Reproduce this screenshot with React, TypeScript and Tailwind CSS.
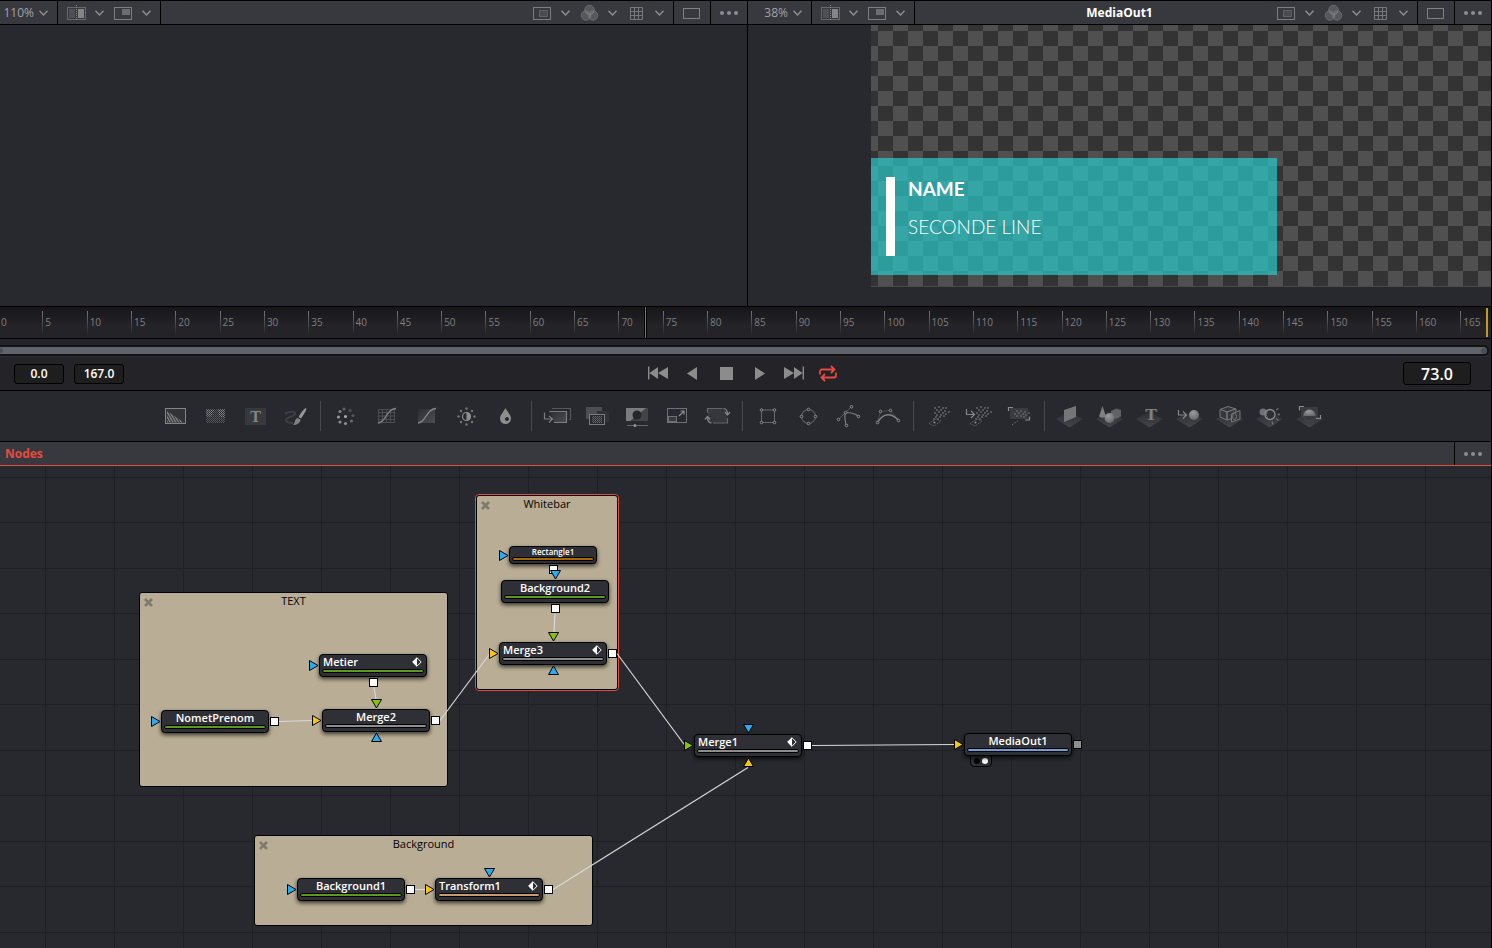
import type { ReactNode } from 'react';
import clsx from 'clsx';

const FONT = "font-['Open_Sans','Noto_Sans',sans-serif]";

/* ---------- Viewer header icons ---------- */

function Chevron() {
  return (
    <svg width="9" height="6" viewBox="0 0 9 6" fill="none" stroke="#8f8f8f" strokeWidth="1.4">
      <path d="M0.5 0.7 4.5 5 8.5 0.7" />
    </svg>
  );
}

function SplitIcon() {
  return (
    <svg width="19" height="16" viewBox="0 0 19 16" fill="none">
      <rect x="0.5" y="2.5" width="18" height="12" stroke="#66676a" />
      <rect x="2" y="4" width="6" height="9" fill="#4f5055" />
      <rect x="11" y="4" width="6" height="9" fill="#858585" />
      <path d="M9.5 0v16" stroke="#8a8a8a" strokeDasharray="1 1" />
    </svg>
  );
}

function SubViewIcon() {
  return (
    <svg width="20" height="16" viewBox="0 0 20 16" fill="none">
      <rect x="1.5" y="2.5" width="17" height="12" stroke="#7d7d7f" />
      <rect x="9" y="4" width="8" height="6" fill="#6c6d70" />
    </svg>
  );
}

function RoiIcon() {
  return (
    <svg width="19" height="16" viewBox="0 0 19 16" fill="none">
      <rect x="0.5" y="2.5" width="17" height="12" stroke="#7d7d7f" />
      <rect x="6" y="5" width="8" height="7" fill="#4b4c51" />
      <rect x="6.5" y="5.5" width="8" height="6" stroke="#77787b" strokeDasharray="1 1" />
    </svg>
  );
}

function ChannelsIcon() {
  return (
    <svg width="20" height="18" viewBox="0 0 20 18" fill="#a0a0a0" fillOpacity="0.3" stroke="#6c6d70">
      <circle cx="10.5" cy="6" r="4.7" />
      <circle cx="7" cy="11.5" r="4.7" />
      <circle cx="14" cy="11.5" r="4.7" />
    </svg>
  );
}

function GridIcon() {
  return (
    <svg width="20" height="16" viewBox="0 0 20 16" fill="none" stroke="#77787b">
      <path d="M4.5 2.5h12v12h-12zM8.5 2.5v12M12.5 2.5v12M4.5 6.5h12M4.5 10.5h12" />
    </svg>
  );
}

function SingleViewIcon() {
  return (
    <svg width="18" height="16" viewBox="0 0 18 16" fill="none" stroke="#808082">
      <rect x="0.5" y="3.5" width="16" height="10" />
    </svg>
  );
}

function Dots() {
  return (
    <svg width="18" height="4" viewBox="0 0 18 4" fill="#8d8d8f">
      <circle cx="2" cy="2" r="2" />
      <circle cx="9" cy="2" r="2" />
      <circle cx="16" cy="2" r="2" />
    </svg>
  );
}

function IconMenu({ label, children }: { label: string; children: ReactNode }) {
  return (
    <button type="button" aria-label={label} className="flex items-center gap-[9px]">
      {children}
      <Chevron />
    </button>
  );
}

function ViewerHeader({ zoom, title, zoomWidth }: { zoom: string; title?: string; zoomWidth: string }) {
  return (
    <header className="grid h-[25px] grid-cols-[1fr_auto_1fr] border-y border-black bg-[#38393e] text-xs text-[#a3a3a3]">
      <div className="flex">
        <button type="button" className={clsx('flex items-center justify-end gap-[5px] pr-[9px]', zoomWidth)}>
          {zoom}
          <Chevron />
        </button>
        <div className="flex items-center gap-[9px] border-x border-black px-[9px]">
          <IconMenu label="Split wipe"><SplitIcon /></IconMenu>
          <IconMenu label="Sub view"><SubViewIcon /></IconMenu>
        </div>
      </div>
      <h2 className="flex items-center font-bold text-white">{title}</h2>
      <div className="flex justify-end">
        <div className="flex items-center gap-[9px] pr-[9px]">
          <IconMenu label="Region of interest"><RoiIcon /></IconMenu>
          <IconMenu label="Channels"><ChannelsIcon /></IconMenu>
          <IconMenu label="Guides"><GridIcon /></IconMenu>
        </div>
        <button type="button" aria-label="Single view" className="flex w-[37px] items-center justify-center border-l border-black">
          <SingleViewIcon />
        </button>
        <button type="button" aria-label="Viewer options" className="flex w-[37px] items-center justify-center border-l border-black">
          <Dots />
        </button>
      </div>
    </header>
  );
}

function Viewers() {
  return (
    <section className="grid h-[306px] grid-cols-[748fr_743fr]">
      <div className="border-r border-black">
        <ViewerHeader zoom="110%" zoomWidth="w-[57px]" />
      </div>
      <div>
        <ViewerHeader zoom="38%" title="MediaOut1" zoomWidth="w-[63px]" />
        <div className="ml-[123px] h-[262px] border-b border-[#4a4a4a] bg-[repeating-conic-gradient(#333333_0_25%,#505050_0_50%)] bg-[length:30px_30px] bg-[position:7px_6px] pt-[133px]">
          <div className="flex h-[117px] w-[406px] gap-[13px] bg-[#29c9c9]/70 py-[19px] pl-[15px] font-['Lato',sans-serif] text-[19px] leading-6 text-white">
            <div className="w-[9px] bg-white" />
            <div className="flex flex-col gap-[14px]">
              <p className="font-bold">NAME</p>
              <p className="font-light">SECONDE LINE</p>
            </div>
          </div>
        </div>
      </div>
    </section>
  );
}

/* ---------- Timeline ---------- */

const TOTAL_FRAMES = 168;
const CURRENT_FRAME = 73;
const TICKS = Array.from({ length: 34 }, (_, i) => i * 5);

function TimeRuler() {
  return (
    <div className="border-y border-black bg-gradient-to-b from-[#17171a] to-[#232328] to-60%">
      <div className="relative -ml-0.5 mr-[3px] flex h-[31px] items-center">
        {TICKS.map((frame) => (
          <div
            key={frame}
            className="relative h-6 min-w-0 basis-0 pl-[3px] text-[10px] leading-[22px] text-[#7f7f7f]"
            style={{ flexGrow: Math.min(5, TOTAL_FRAMES - frame) }}
          >
            <span className="absolute inset-y-0 left-0 w-px bg-gradient-to-b from-[#77777a] to-transparent" />
            {frame}
          </div>
        ))}
        <span
          className="absolute inset-y-0 -ml-px w-[3px] border-x border-black bg-[#e64b3d]"
          style={{ left: `${(CURRENT_FRAME / TOTAL_FRAMES) * 100}%` }}
        />
        <span className="absolute inset-y-px right-0 w-0.5 bg-[#c09a27]" />
      </div>
    </div>
  );
}

function RangeBar() {
  return (
    <div className="border-b border-[#2d2d31] bg-[#232328] pt-1.5 pr-0.5">
      <div className="h-[11px] rounded-r-full bg-[#131315] py-0.5 pr-0.5">
        <div className="flex h-[7px] items-center justify-between rounded-r-full bg-[#5f636b]">
          <span className="h-[5px] w-[3px] rounded-r-full bg-[#4b4e55]" />
          <span className="size-1.5 rounded-full bg-[#4b4e55]" />
        </div>
      </div>
    </div>
  );
}

function TransportButton({ label, children }: { label: string; children: ReactNode }) {
  return (
    <button type="button" aria-label={label} className="flex w-[34px] items-center justify-center">
      <svg width="22" height="18" viewBox="0 0 22 18" fill="#8c8c8c">{children}</svg>
    </button>
  );
}

function FrameField({ label, value, className }: { label: string; value: string; className: string }) {
  return (
    <input
      aria-label={label}
      defaultValue={value}
      className={clsx('rounded-[3px] border border-black bg-[#1e1e1f] text-center font-semibold text-white', className)}
    />
  );
}

function Transport() {
  return (
    <div className="grid h-[34px] grid-cols-[1fr_auto_1fr] items-center border-b border-black bg-[#232328] pr-1.5">
      <div className="flex gap-2.5 pl-3.5">
        <FrameField label="Render start" value="0.0" className="h-5 w-[50px] text-xs" />
        <FrameField label="Render end" value="167.0" className="h-5 w-[50px] text-xs" />
      </div>
      <div className="flex">
        <TransportButton label="First frame">
          <path d="M1 1.5h1.4v13H1zM11 2v12L2.4 8zM21 2v12L11 8z" />
        </TransportButton>
        <TransportButton label="Play reverse">
          <path d="M16 2v13L6 8.5z" />
        </TransportButton>
        <TransportButton label="Stop">
          <path d="M5 2h13v13H5z" />
        </TransportButton>
        <TransportButton label="Play">
          <path d="M6 2v13l10-6.5z" />
        </TransportButton>
        <TransportButton label="Last frame">
          <path d="M19.6 1.5H21v13h-1.4zM11 2v12l8.6-6zM1 2v12l10-6z" />
        </TransportButton>
        <TransportButton label="Loop">
          <g fill="none" stroke="#e64b3d" strokeWidth="1.8">
            <path d="M3 9.5V6.5a2 2 0 0 1 2-2h12M14 1l3.5 3.5L14 8" />
            <path d="M19 7.5v3a2 2 0 0 1-2 2H5M8 9l-3.5 3.5L8 16" />
          </g>
        </TransportButton>
      </div>
      <div className="flex justify-end pr-3.5">
        <FrameField label="Current frame" value="73.0" className="h-[23px] w-[68px] text-base" />
      </div>
    </div>
  );
}

/* ---------- Tool bar ---------- */

type Tool = { name: string; icon: ReactNode };

const Base3D = () => <path d="M2 15 15.5 8 29 15 15.5 23.5z" fill="url(#floor)" />;

// dots thrown out by the particle emitters
const SPARKS = [
  [12, 4], [16, 3], [20, 4], [23, 4], [14, 6], [18, 6], [22, 7], [26, 8], [12, 9], [16, 8],
  [20, 9], [23, 10], [14, 11], [18, 11], [21, 12], [13, 13], [17, 13], [11, 15], [15, 15],
];

const Sparks = ({ dx = 0 }: { dx?: number }) => (
  <g fill="#9a9a9a">
    {SPARKS.map(([x, y]) => (
      <circle key={`${x}-${y}`} cx={x + dx} cy={y} r="0.8" />
    ))}
  </g>
);

const Emitter = ({ dx = 0 }: { dx?: number }) => (
  <g transform={`translate(${dx} 0)`}>
    <path d="M6 19.5 13 15l5 2-7 5z" fill="none" stroke="#77787b" strokeDasharray="1.5 1" strokeWidth="0.8" />
    <circle cx="11.5" cy="18.5" r="1" fill="#9a9a9a" />
  </g>
);

const CornerPoints = ({ points }: { points: number[][] }) => (
  <g fill="#28292e" stroke="#a0a0a0" strokeWidth="0.9">
    {points.map(([x, y]) => (
      <circle key={`${x}-${y}`} cx={x} cy={y} r="1.3" />
    ))}
  </g>
);

const TRACKER_DOTS = [
  [14, 5, 0.5], [20, 6.5, 0.35], [23, 11.5, 0.4], [21.5, 17, 0.6],
  [15.5, 19.5, 0.9], [10, 18, 0.9], [8.5, 13, 1], [10, 7.5, 0.8],
];

const TOOL_GROUPS: Tool[][] = [
  [
    {
      name: 'Background',
      icon: (
        <>
          <rect x="6.5" y="4.5" width="20" height="15" fill="#35363a" stroke="#8e8e90" />
          <path d="M8 7v11.5h17z" fill="url(#hatch)" />
        </>
      ),
    },
    {
      name: 'Fast Noise',
      icon: (
        <>
          <rect x="7" y="5" width="19" height="14" fill="url(#noise)" opacity="0.5" />
          <path d="M19 5h7v9l-6-2zM7 5l8 1-3 7-5-1z" fill="url(#noise)" />
        </>
      ),
    },
    {
      name: 'Text+',
      icon: (
        <>
          <rect x="6" y="4" width="21" height="17" rx="1" fill="#3a3b40" />
          <text x="16.5" y="17.5" textAnchor="middle" fontFamily="Liberation Serif, serif" fontWeight="bold" fontSize="16" fill="#8e8e8e">T</text>
        </>
      ),
    },
    {
      name: 'Paint',
      icon: (
        <>
          <path d="M6 10c4-3 11-3 10 0s-9 3-9 6c0 3 5 3 7 3" fill="none" stroke="#404146" strokeWidth="2.2" />
          <path d="M27 4c1 1-.5 4-5 10.5L19.500 13C23 7 26 4 27 4z" fill="#a3a3a3" />
          <path d="M18.5 14l3 1.500c0 3.500-3.500 5.500-7.500 5.500 2-1.500 1.500-6 4.500-7z" fill="#8a8a8a" />
        </>
      ),
    },
  ],
  [
    {
      name: 'Tracker',
      icon: (
        <g fill="#a5a5a5">
          {TRACKER_DOTS.map(([x, y, opacity]) => (
            <circle key={`${x}-${y}`} cx={x} cy={y} r="1.6" opacity={opacity} />
          ))}
          <circle cx="15.5" cy="12.5" r="1.5" fill="#c0c0c0" />
        </g>
      ),
    },
    {
      name: 'Color Curves',
      icon: (
        <>
          <path d="M8.5 5.5h16v13h-16zM12.5 5.5v13M16.5 5.5v13M20.5 5.5v13M8.5 8.5h16M8.5 12h16M8.5 15.5h16" fill="none" stroke="#505156" />
          <path d="M8 19c8 0 8-14 18-14.5" fill="none" stroke="#8d8d8d" strokeWidth="1.3" />
        </>
      ),
    },
    {
      name: 'Color Corrector',
      icon: (
        <>
          <rect x="8" y="5" width="17" height="14" fill="url(#shade)" />
          <path d="M8 19c8 0 8-14 18-14.5" fill="none" stroke="#929292" strokeWidth="1.3" />
        </>
      ),
    },
    {
      name: 'Brightness Contrast',
      icon: (
        <>
          <circle cx="16.5" cy="12.5" r="4" fill="none" stroke="#9a9a9a" strokeWidth="1.2" />
          <path d="M16.5 8.5a4 4 0 0 1 0 8z" fill="#9a9a9a" />
          <g fill="#7d7d80">
            <circle cx="16.5" cy="4.5" r="1.2" />
            <circle cx="16.5" cy="20.5" r="1.2" />
            <circle cx="8.5" cy="12.5" r="1.2" />
            <circle cx="24.5" cy="12.5" r="1.2" />
            <circle cx="11" cy="7" r="1.2" />
            <circle cx="22" cy="18" r="1.2" />
            <circle cx="11" cy="18" r="1.2" />
            <circle cx="22" cy="7" r="1.2" />
          </g>
        </>
      ),
    },
    {
      name: 'Blur',
      icon: (
        <path fillRule="evenodd" d="M15.5 4c2 4 5.5 7 5.5 10.5a5.5 5.5 0 0 1-11 0C10 11 13.5 8 15.5 4zM17 13a2 2 0 1 0 .01 0z" fill="#999999" />
      ),
    },
  ],
  [
    {
      name: 'Merge input',
      icon: (
        <g fill="none" stroke="#858587" strokeWidth="1.2">
          <path d="M11 4.5h18.5v11H28" stroke="#5c5d61" />
          <path d="M9 8v-.5h16.5v11H13" fill="url(#shade)" />
          <path d="M3.5 8.5V15H11M8 12l3.5 3L8 18.5" />
        </g>
      ),
    },
    {
      name: 'Merge',
      icon: (
        <>
          <rect x="5" y="3" width="16" height="12" fill="#515257" />
          <rect x="16" y="7" width="12" height="11" fill="#323338" />
          <rect x="8.5" y="10.5" width="15" height="10" fill="#28292e" stroke="#858587" />
          <rect x="11" y="12" width="10" height="7" fill="url(#noise)" opacity="0.7" />
        </>
      ),
    },
    {
      name: 'Matte Control',
      icon: (
        <>
          <path d="M5 4h22v13H5z" fill="#47484c" />
          <path d="M5 4h20L9 17H5z" fill="#858587" />
          <circle cx="16" cy="11" r="4.5" fill="#25262a" />
          <path d="M6 21.5h7M16 21.5h11" stroke="#6c6d70" />
          <circle cx="14" cy="21.5" r="1.5" fill="#a0a0a0" />
        </>
      ),
    },
    {
      name: 'Resize',
      icon: (
        <g fill="none" stroke="#77787b">
          <rect x="6.5" y="4.5" width="19" height="14" />
          <rect x="7.5" y="12.5" width="8" height="5" fill="#3b3c41" />
          <path d="m18 12 5-5M19.5 7H23v3.5" stroke="#9a9a9a" strokeWidth="1.2" />
        </g>
      ),
    },
    {
      name: 'Transform',
      icon: (
        <g fill="none" stroke="#6c6d70" strokeWidth="1.2">
          <rect x="7" y="5" width="19" height="14" fill="#38393e" stroke="none" />
          <path d="M6.5 9V4.5h15M26.5 14v5H12" />
          <path d="M22.5 4.5c3 0 4 2 4 6M24 8l2.5 3L29 8M4 15.5l2.5-3 2.500 3M6.500 13c0 4 1 6 4 6" stroke="#929294" />
        </g>
      ),
    },
  ],
  [
    {
      name: 'Rectangle mask',
      icon: (
        <>
          <rect x="9.5" y="6" width="13" height="12.5" fill="none" stroke="#707173" />
          <CornerPoints points={[[9.5, 6], [22.5, 6], [9.5, 18.5], [22.5, 18.5]]} />
        </>
      ),
    },
    {
      name: 'Ellipse mask',
      icon: (
        <>
          <circle cx="16.5" cy="12.5" r="7" fill="none" stroke="#606164" strokeWidth="1.2" />
          <CornerPoints points={[[9.5, 12.5], [23.5, 12.5], [16.5, 5.5], [16.5, 19.5]]} />
        </>
      ),
    },
    {
      name: 'Polygon mask',
      icon: (
        <>
          <path d="m6.5 15.5 7-7 6-6" fill="none" stroke="#606164" />
          <path d="M14.5 21.5c-2-5-2-9-1-13 4 0 10 1 13 4" fill="none" stroke="#858587" strokeWidth="1.2" />
          <CornerPoints points={[[6.5, 15.5], [13.5, 8.5], [19.5, 2.8], [26.5, 12.5], [14.5, 21.5]]} />
        </>
      ),
    },
    {
      name: 'BSpline mask',
      icon: (
        <>
          <path d="m5.5 18.5 3-11 10-1 8 10" fill="none" stroke="#4b4c50" />
          <path d="M5.5 18.5c6-10 14-10 21-2" fill="none" stroke="#8d8d8d" strokeWidth="1.3" />
          <CornerPoints points={[[5.5, 18.5], [8.5, 7.5], [18.5, 6.5], [26.5, 16.5]]} />
        </>
      ),
    },
  ],
  [
    { name: 'Emitter', icon: <><Sparks /><Emitter /></> },
    {
      name: 'Image Emitter',
      icon: (
        <>
          <path d="M3.5 5v5.5H11M8 7l3.5 3.5L8 14" fill="none" stroke="#929294" strokeWidth="1.2" />
          <Sparks dx={2} />
          <Emitter dx={1} />
        </>
      ),
    },
    {
      name: 'Particle Render',
      icon: (
        <>
          <rect x="7" y="4" width="18" height="11" fill="#3d3e43" />
          <path d="M5.5 7V3.5H10M26.5 12.5V16H22" fill="none" stroke="#97979a" strokeWidth="1.2" />
          <g fill="#9a9a9a">
            {SPARKS.slice(4, 15).map(([x, y]) => (
              <circle key={`${x}-${y}`} cx={x} cy={y + 1} r="0.7" />
            ))}
          </g>
          <path d="m9 21 7-5" stroke="#77787b" strokeDasharray="1.5 1.5" />
        </>
      ),
    },
  ],
  [
    { name: 'Image Plane 3D', icon: <><Base3D /><path d="m10 6 12-4v11l-12 5z" fill="#7f7f81" /></> },
    {
      name: 'Shape 3D',
      icon: (
        <>
          <Base3D />
          <path d="M8.5 2 5 12.5c2 1.5 5 1.5 7 0z" fill="#8a8a8c" />
          <path d="m17 7 5.5-2.5L27 6v6.5L22 15l-5-2z" fill="#68696c" />
          <circle cx="15.5" cy="14" r="5" fill="url(#ball)" />
        </>
      ),
    },
    {
      name: 'Text 3D',
      icon: (
        <>
          <Base3D />
          <text x="18" y="16" textAnchor="middle" fontFamily="Liberation Serif, serif" fontWeight="bold" fontSize="17" fill="#58595c">T</text>
          <text x="17" y="16" textAnchor="middle" fontFamily="Liberation Serif, serif" fontWeight="bold" fontSize="17" fill="#8a8a8c">T</text>
        </>
      ),
    },
    {
      name: 'Merge 3D',
      icon: (
        <>
          <Base3D />
          <path d="M4.5 6v5H12M9 7.5l3.5 3.5L9 14.5" fill="none" stroke="#929294" strokeWidth="1.2" />
          <circle cx="20" cy="11" r="5" fill="url(#ball)" />
        </>
      ),
    },
    {
      name: 'Camera 3D',
      icon: (
        <>
          <Base3D />
          <g fill="#38393e" stroke="#808082" strokeLinejoin="round">
            <path d="m6 5.5 8-3L22 5l-9 3z" />
            <path d="m6 5.5 7 2.5v8l-7-3zM13 8l9-3v3l-4 2-1 5-4 1z" />
            <path d="m17.5 10 8.5-3.5V15l-8.500 3z" />
            <ellipse cx="20.5" cy="12.5" rx="2" ry="3" />
          </g>
        </>
      ),
    },
    {
      name: 'Spot Light',
      icon: (
        <>
          <Base3D />
          <circle cx="9" cy="8" r="3.5" fill="#77787b" />
          <circle cx="16" cy="10.5" r="5" fill="#2e2f34" stroke="#98989a" strokeWidth="1.3" />
          <path d="M14 7.5a3.5 3.5 0 0 0 0 6" fill="none" stroke="#77787b" />
          <path d="m22 6 2.5-1.5M23.5 10.5H26M22 14.5l2.5 2M18 17.5l1 3" stroke="#77787b" strokeWidth="1.3" />
        </>
      ),
    },
    {
      name: 'Renderer 3D',
      icon: (
        <>
          <Base3D />
          <rect x="7" y="3" width="17" height="11" fill="#3d3e43" />
          <path d="M5.5 6.5v-4H10M26.5 11v3.5H22" fill="none" stroke="#97979a" strokeWidth="1.2" />
          <circle cx="15.5" cy="11" r="6" fill="#3a3b3f" stroke="#4a4b4f" />
          <path d="M9.5 12a6 6.5 0 0 1 12 0z" fill="url(#ball)" />
        </>
      ),
    },
  ],
];

function IconDefs() {
  return (
    <svg width="0" height="0" className="absolute" aria-hidden="true">
      <defs>
        <pattern id="hatch" width="2.4" height="2.4" patternUnits="userSpaceOnUse" patternTransform="rotate(-30)">
          <rect width="1.2" height="2.4" fill="#98989a" />
        </pattern>
        <pattern id="noise" width="2" height="2" patternUnits="userSpaceOnUse">
          <rect width="1" height="1" fill="#98989a" />
          <rect x="1" y="1" width="1" height="1" fill="#77787b" />
        </pattern>
        <linearGradient id="shade" x1="0" y1="0" x2="1" y2="1">
          <stop offset="0" stopColor="#2e2f34" />
          <stop offset="1" stopColor="#515257" />
        </linearGradient>
        <linearGradient id="floor" x1="0" y1="0" x2="0" y2="1">
          <stop offset="0" stopColor="#303136" />
          <stop offset="1" stopColor="#47484c" />
        </linearGradient>
        <radialGradient id="ball" cx="0.4" cy="0.3" r="0.8">
          <stop offset="0" stopColor="#a8a8a8" />
          <stop offset="1" stopColor="#68696c" />
        </radialGradient>
      </defs>
    </svg>
  );
}

function ToolBar() {
  return (
    <div className="flex h-[51px] items-center justify-center border-b border-black pr-1.5">
      <IconDefs />
      {TOOL_GROUPS.map((group, i) => (
        <div key={i} className="flex items-center">
          {i > 0 && <span className="mx-[5px] h-[30px] w-px bg-[#48494d]" />}
          {group.map((tool) => (
            <button key={tool.name} type="button" aria-label={tool.name} className="flex w-10 justify-center">
              <svg width="32" height="24" viewBox="0 0 32 24" className="opacity-90">{tool.icon}</svg>
            </button>
          ))}
        </div>
      ))}
    </div>
  );
}

/* ---------- Node graph ---------- */

const GROUPS = [
  { title: 'TEXT', x: 139, y: 126, w: 309, h: 195 },
  { title: 'Whitebar', x: 475, y: 28, w: 144, h: 197, selected: true },
  { title: 'Background', x: 254, y: 369, w: 339, h: 91 },
];

type GraphNode = { name: string; x: number; y: number; bar: string; keyed?: boolean; small?: boolean };

const NODES: GraphNode[] = [
  { name: 'NometPrenom', x: 161, y: 244, bar: 'bg-[#5b9a1e]' },
  { name: 'Metier', x: 319, y: 188, bar: 'bg-[#5b9a1e]', keyed: true },
  { name: 'Merge2', x: 322, y: 243, bar: 'bg-[#8e8e8e]' },
  { name: 'Rectangle1', x: 509, y: 80, bar: 'bg-[#a66a00]', small: true },
  { name: 'Background2', x: 501, y: 114, bar: 'bg-[#5b9a1e]' },
  { name: 'Merge3', x: 499, y: 176, bar: 'bg-[#8e8e8e]', keyed: true },
  { name: 'Merge1', x: 694, y: 268, bar: 'bg-[#8e8e8e]', keyed: true },
  { name: 'MediaOut1', x: 964, y: 267, bar: 'bg-[#6f9fd8]' },
  { name: 'Background1', x: 297, y: 412, bar: 'bg-[#5b9a1e]' },
  { name: 'Transform1', x: 435, y: 412, bar: 'bg-[#c99a6b]', keyed: true },
];

const WIRES = [
  [279, 255, 312, 254],
  [374, 221, 376, 233],
  [440, 254, 490, 187],
  [555, 147, 554, 166],
  [617, 187, 685, 279],
  [812, 279, 954, 278],
  [415, 423, 426, 423],
  [553, 423, 748, 301],
];

const BLUE = '#29abf2';
const YELLOW = '#f5c518';
const GREEN = '#86c400';

const INPUTS: [string, number, number, string][] = [
  ['right', 155, 255, BLUE],
  ['right', 313, 199, BLUE],
  ['right', 316, 254, YELLOW],
  ['down', 376, 237, GREEN],
  ['up', 376, 271, BLUE],
  ['right', 503, 89, BLUE],
  ['down', 555, 108, BLUE],
  ['right', 493, 187, YELLOW],
  ['down', 553, 170, GREEN],
  ['up', 553, 204, BLUE],
  ['right', 688, 279, GREEN],
  ['down', 748, 262, BLUE],
  ['up', 748, 296, YELLOW],
  ['right', 958, 278, YELLOW],
  ['right', 291, 423, BLUE],
  ['right', 429, 423, YELLOW],
  ['down', 489, 406, BLUE],
];

const OUTPUTS = [
  [274, 255], [373, 216], [435, 254], [553, 103], [555, 142],
  [612, 187], [807, 279], [410, 423], [548, 423],
];

const TRIANGLES: Record<string, string> = {
  right: 'M-3.5 -4.5 L5 0.5 L-3.5 5.5z',
  down: 'M-4.5 -3.5 L5.5 -3.5 L0.5 5z',
  up: 'M-4.5 4.5 L5.5 4.5 L0.5 -4z',
};

function Wiring() {
  return (
    <svg className="pointer-events-none absolute inset-0 size-full" fill="none">
      <g stroke="#d8d8d8" strokeWidth="1.2">
        {WIRES.map(([x1, y1, x2, y2]) => (
          <line key={`${x1}-${y1}`} x1={x1} y1={y1 + 0.5} x2={x2} y2={y2 + 0.5} />
        ))}
      </g>
      <g stroke="#000000">
        {OUTPUTS.map(([x, y]) => (
          <rect key={`${x}-${y}`} x={x - 3.5} y={y - 3.5} width="8" height="8" fill="#ffffff" />
        ))}
        <rect x="1073.5" y="274.5" width="8" height="8" fill="#8e8e8e" />
        {INPUTS.map(([dir, x, y, color]) => (
          <path key={`${x}-${y}`} d={TRIANGLES[dir]} transform={`translate(${x} ${y})`} fill={color} />
        ))}
      </g>
    </svg>
  );
}

function GridLines() {
  return (
    <svg className="absolute inset-0 size-full" stroke="#1f2024">
      {Array.from({ length: 40 }, (_, i) => (
        <line key={`v${i}`} x1={45.5 + i * 69} x2={45.5 + i * 69} y1="0" y2="100%" />
      ))}
      {Array.from({ length: 30 }, (_, i) => {
        const y = Math.floor(11 + i * 45.5) + 0.5;
        return <line key={`h${i}`} x1="0" x2="100%" y1={y} y2={y} />;
      })}
    </svg>
  );
}

function GroupBox({ title, x, y, w, h, selected }: (typeof GROUPS)[number]) {
  return (
    <div
      className={clsx('absolute rounded', selected && 'border border-[#e64b3d]')}
      style={{ left: x, top: y, width: w, height: h }}
    >
      <div className="relative h-full rounded-[3px] border border-black bg-[#b9ae95] text-center text-[11px] leading-4 text-black">
        {title}
        <button type="button" aria-label={`Close ${title}`} className="absolute top-[5px] left-1">
          <svg width="9" height="9" viewBox="0 0 9 9" stroke="#7f7a6e" strokeWidth="2.6">
            <path d="m1 1 7 7M8 1 1 8" />
          </svg>
        </button>
      </div>
    </div>
  );
}

function NodeTile({ name, x, y, bar, keyed, small }: GraphNode) {
  return (
    <div
      className={clsx(
        'absolute flex flex-col justify-between rounded border border-black bg-[#2f3035] px-0.5 pb-[3px] font-semibold text-white shadow-[0_2px_4px_rgba(0,0,0,0.7)]',
        small ? 'h-[18px] w-[88px] text-[8px] leading-[10px]' : 'h-[23px] w-[108px] text-[11px] leading-[14px]',
      )}
      style={{ left: x, top: y }}
    >
      <div className={clsx('flex items-center px-px', keyed ? 'justify-between' : 'justify-center')}>
        {name}
        {keyed && (
          <svg width="10" height="10" viewBox="0 0 10 10" className="mr-px">
            <path d="m5 .8 4.2 4.2L5 9.2.8 5z" stroke="#ffffff" fill="none" />
            <path d="M5 .3v9.4L.3 5z" fill="#ffffff" />
          </svg>
        )}
      </div>
      <div className={clsx('h-1 shrink-0 rounded-xs border border-black', bar)} />
    </div>
  );
}

function NodeCanvas() {
  return (
    <div className="relative flex-1 overflow-hidden">
      <GridLines />
      {GROUPS.map((group) => <GroupBox key={group.title} {...group} />)}
      <div className="absolute top-[289px] left-[970px] flex h-3 w-[22px] items-center justify-center gap-0.5 rounded-b border border-black bg-[#2f3035]">
        <span className="size-1.5 rounded-full bg-black" />
        <span className="size-1.5 rounded-full bg-white" />
      </div>
      {NODES.map((node) => <NodeTile key={node.name} {...node} />)}
      <Wiring />
    </div>
  );
}

export default function App() {
  return (
    <main className={clsx('flex min-h-screen flex-col border-r border-black bg-[#28292e]', FONT)}>
      <Viewers />
      <TimeRuler />
      <RangeBar />
      <Transport />
      <ToolBar />
      <header className="flex h-6 items-stretch justify-between border-b border-[#e64b3d] bg-[#38393e] text-xs">
        <h2 className="flex items-center pl-[5px] font-bold text-[#e64b3d]">Nodes</h2>
        <button type="button" aria-label="Node options" className="flex w-[37px] items-center justify-center border-l border-black">
          <Dots />
        </button>
      </header>
      <NodeCanvas />
    </main>
  );
}
